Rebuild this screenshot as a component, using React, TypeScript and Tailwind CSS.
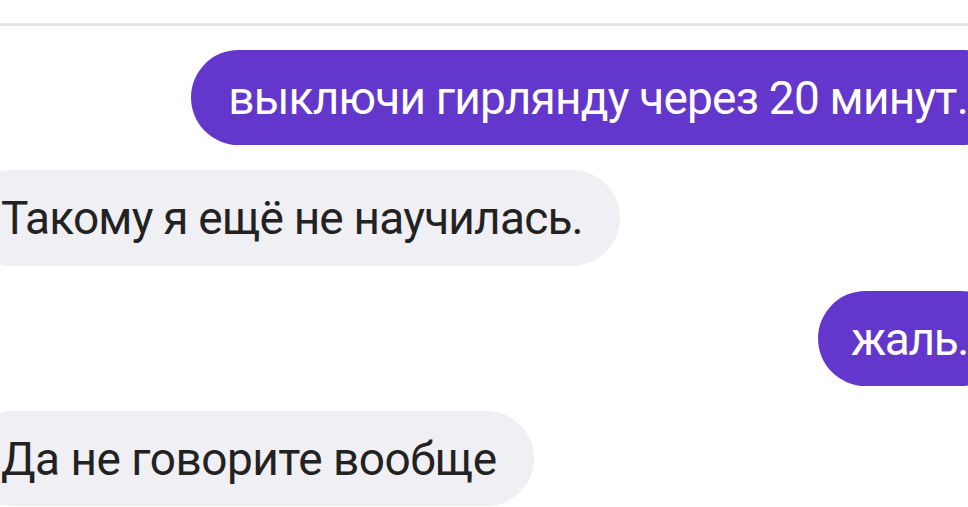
export default function App() {
  return (
    <div className="w-[968px] h-[507px] overflow-hidden bg-white" style={{ fontFamily: 'Roboto, "Noto Sans", sans-serif' }}>
      {/* top divider */}
      <div className="h-[23px]" />
      <div className="h-[3px] bg-[#e6e6e6]" />

      <div className="flex flex-col gap-[25px] pt-[24px]">
        {/* outgoing */}
        <div className="flex justify-end -mr-[44px]">
          <div className="h-[95px] rounded-full bg-[#6437cc] pl-[37px] pr-[44px] flex items-center whitespace-nowrap text-white text-[46px] leading-none tracking-[-0.8px]">
            выключи гирлянду через 20 минут.
          </div>
        </div>

        {/* incoming */}
        <div className="flex justify-start -ml-[36px]">
          <div className="h-[96px] rounded-full bg-[#efeff4] px-[37px] flex items-center whitespace-nowrap text-[#222] text-[46px] leading-none tracking-[-0.8px]">
            Такому я ещё не научилась.
          </div>
        </div>

        <div className="flex justify-end -mr-[40px]">
          <div className="h-[95px] rounded-full bg-[#6437cc] pl-[33px] pr-[40px] flex items-center whitespace-nowrap text-white text-[46px] leading-none tracking-[-1.4px]">
            жаль.
          </div>
        </div>

        <div className="flex justify-start -ml-[36px]">
          <div className="h-[95px] rounded-full bg-[#efeff4] px-[37px] flex items-center whitespace-nowrap text-[#222] text-[46px] leading-none tracking-[-0.5px]">
            Да не говорите вообще
          </div>
        </div>
      </div>
    </div>
  )
}
